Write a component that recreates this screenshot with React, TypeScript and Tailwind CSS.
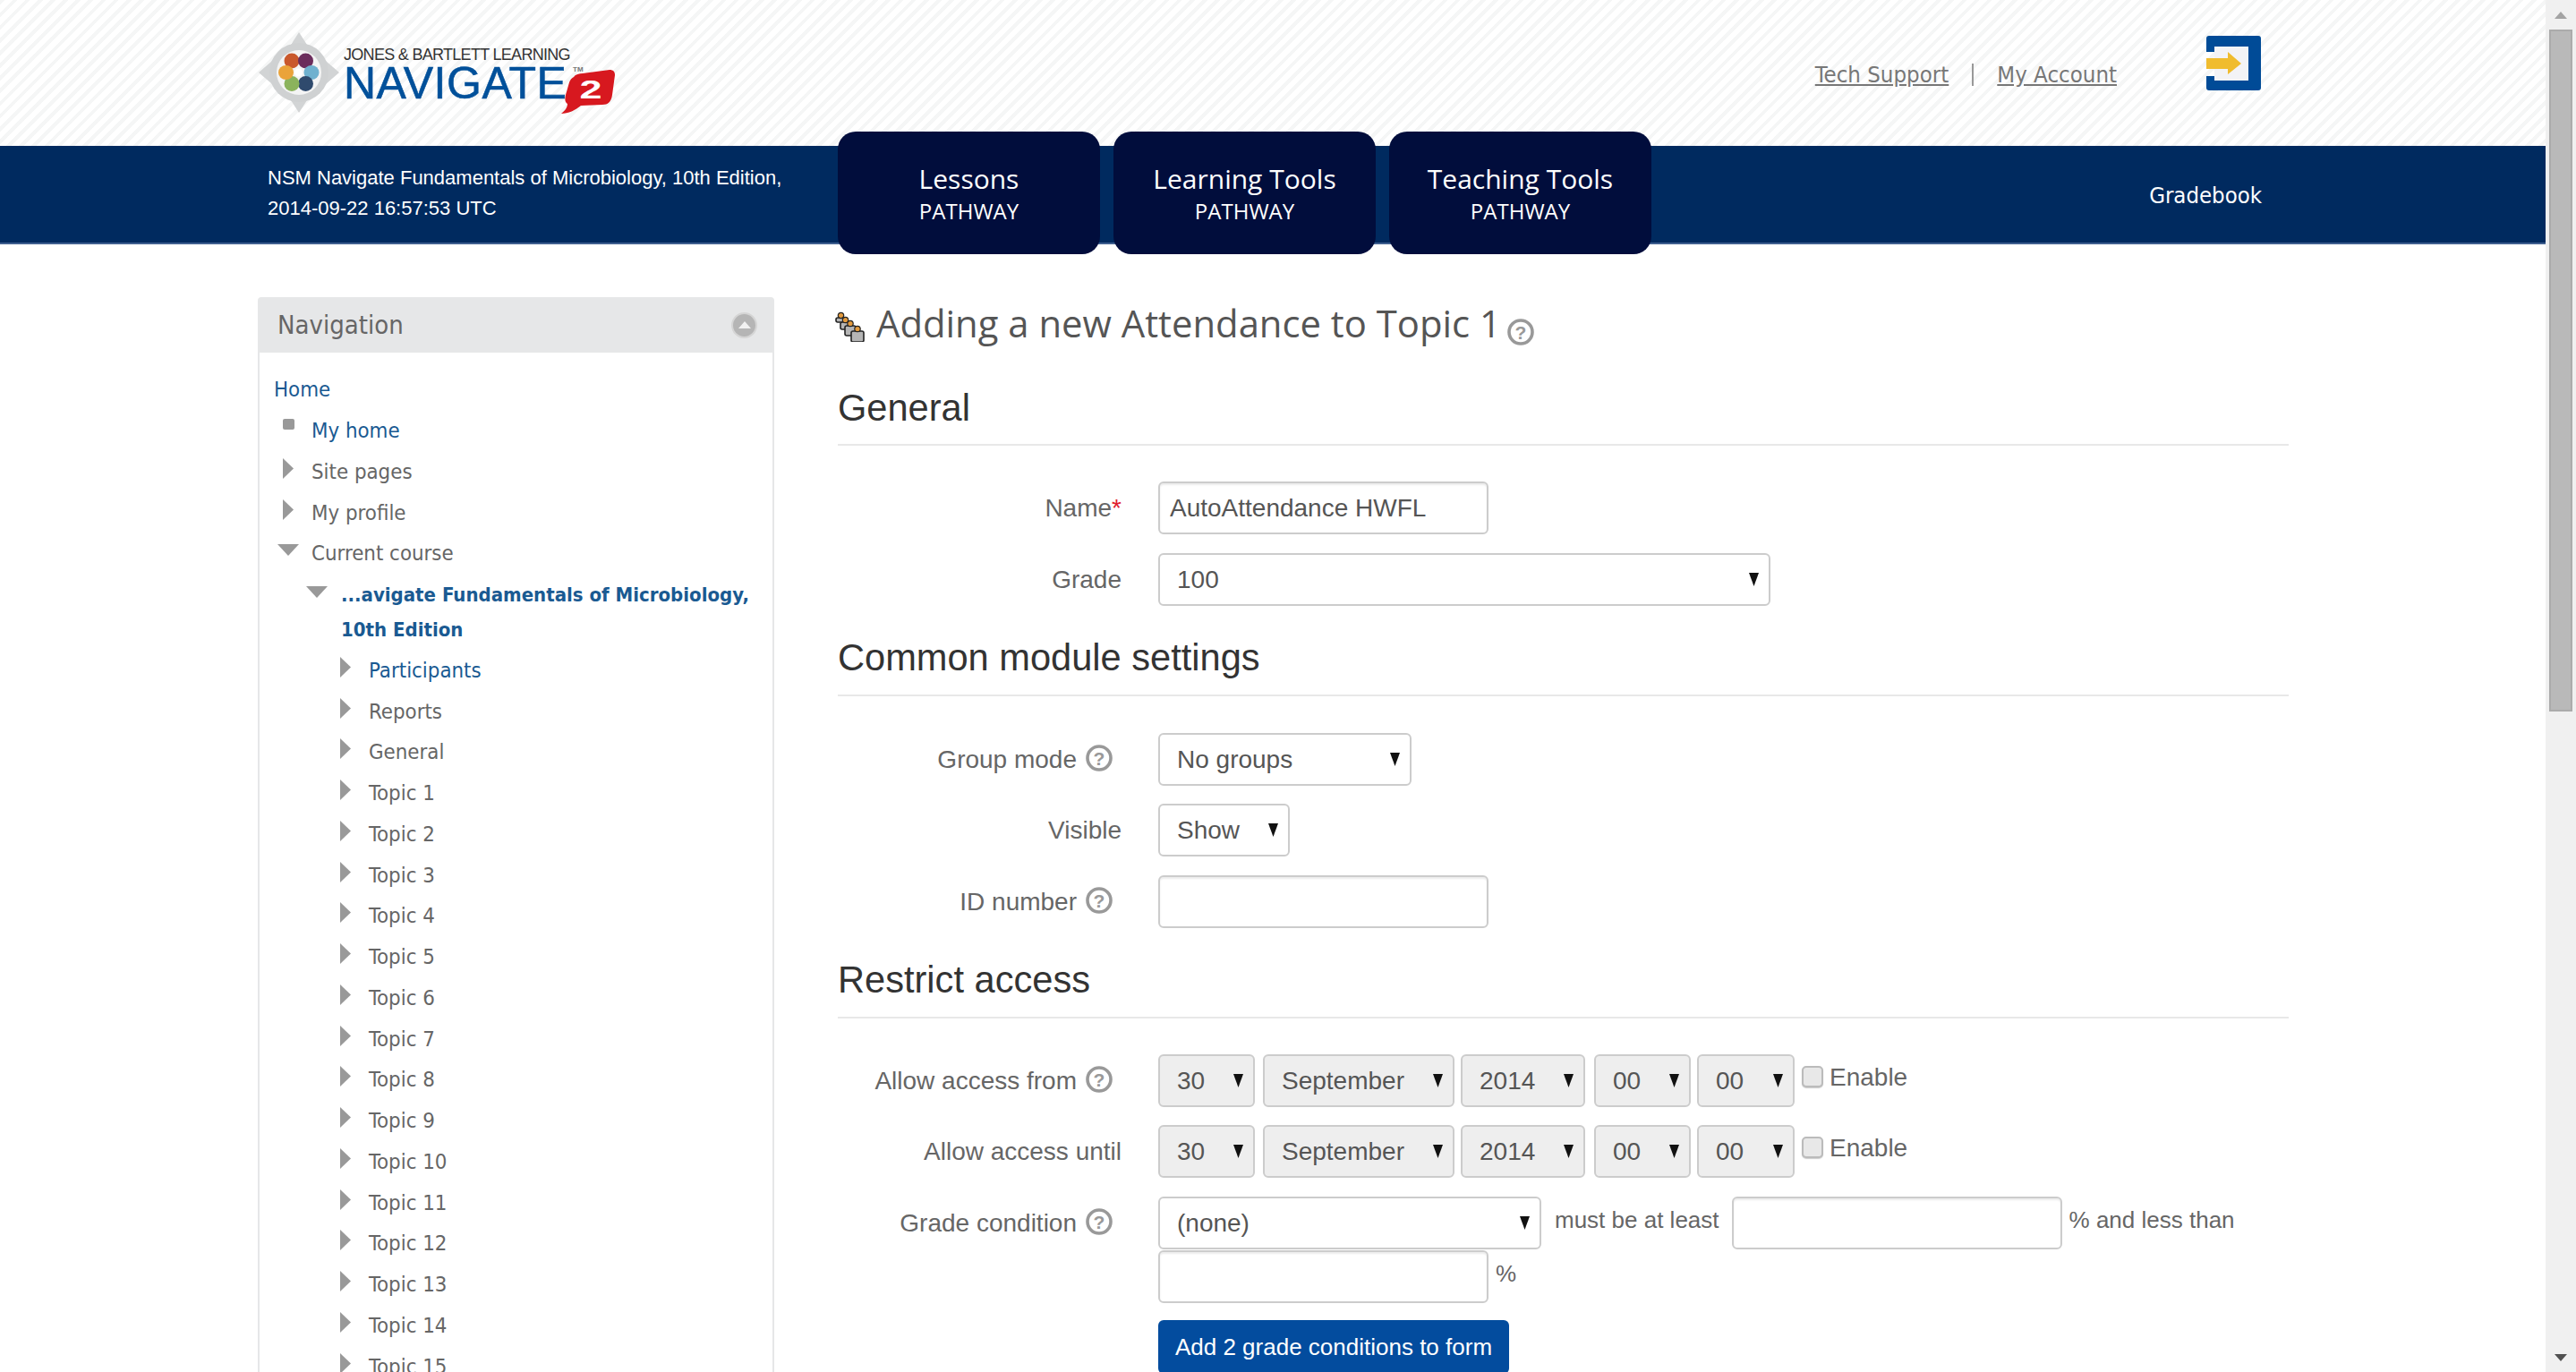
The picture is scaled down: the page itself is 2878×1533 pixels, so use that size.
import React from "react";

const SIDE = "font-['DejaVu_Sans','Noto_Sans',sans-serif] font-stretch-condensed";
const ARIAL = "font-['Liberation_Sans',Arial,sans-serif]";
const OPEN = "font-['Open_Sans',sans-serif]";

function Logo() {
  return (
    <div className="flex items-start pt-[36px]">
      <svg width="90" height="90" viewBox="0 0 90 90" className="shrink-0">
        <polygon points="45,0 54,14 90,45 54,76 45,90 36,76 0,45 36,14" fill="#d2d4d5" />
        <circle cx="45" cy="45" r="33" fill="#cfd1d2" />
        <circle cx="45" cy="45" r="25" fill="#f4f4f4" />
        <ellipse cx="37" cy="32" rx="8.5" ry="8.5" fill="#c9582c" />
        <ellipse cx="52.5" cy="32" rx="8.5" ry="8.5" fill="#6b2d5c" />
        <ellipse cx="59" cy="45" rx="8.5" ry="8" fill="#6fb1cf" />
        <ellipse cx="52.5" cy="57.5" rx="8.5" ry="8.5" fill="#2f4a6d" />
        <ellipse cx="37" cy="57.5" rx="8.5" ry="8.5" fill="#8bb35c" />
        <ellipse cx="30.5" cy="45" rx="8.5" ry="8" fill="#eaa33a" />
        <circle cx="44.5" cy="45" r="4.5" fill="#fff" />
      </svg>
      <div className="ml-[5px] flex flex-col pt-[14px]">
        <span className={`${ARIAL} text-[18px] leading-[22px] tracking-[-0.7px] text-[#333]`}>JONES &amp; BARTLETT LEARNING</span>
        <div className="flex items-start">
          <span className={`${ARIAL} text-[50px] leading-[42px] tracking-[0.5px] text-[#00509a] [-webkit-text-stroke:0.6px_#00509a]`}>NAVIGATE</span>
          <svg width="60" height="54" viewBox="0 0 60 54" className="-ml-[6px] mt-[1px] shrink-0">
            <text x="13" y="7" fontFamily="Liberation Sans" fontSize="8" fontWeight="700" fill="#777">TM</text>
            <path d="M14 13 C16 10 20 9 24 9 L54 5 C58 5 60 7 60 11 L57 33 C56 41 52 44 46 44 L22 45 C16 50 8 54 0 54 C4 51 7 47 7 43 C4 41 4 38 5 33 L9 19 C10 16 12 14 14 13 Z" fill="#d7181f" />
            <text transform="translate(33 37) scale(1.5 1)" textAnchor="middle" fontFamily="Liberation Sans" fontWeight="700" fontSize="30" fill="#fff">2</text>
          </svg>
        </div>
      </div>
    </div>
  );
}

function LogoutIcon() {
  return (
    <svg width="61" height="61" viewBox="0 0 61 61" className="shrink-0">
      <path d="M3 0 H58 a3 3 0 0 1 3 3 V58 a3 3 0 0 1 -3 3 H3 a3 3 0 0 1 -3 -3 V45 H9 V50 H47 V12 H9 V18 H0 V3 a3 3 0 0 1 3 -3 Z" fill="#004b97" />
      <rect x="9" y="12" width="38" height="38" fill="#f3f3f6" />
      <path d="M0 25 H24 V18 L39 31 L24 43 V37 H0 Z" fill="#f0bc2e" />
    </svg>
  );
}

function Header() {
  return (
    <div className="flex h-[163px] justify-between bg-[repeating-linear-gradient(135deg,#f5f6f6_0px,#f5f6f6_4px,#ffffff_4px,#ffffff_10px)] pl-[289px] pr-[318px]">
      <Logo />
      <div className="flex items-start">
        <div className={`${SIDE} mt-[65px] flex h-[36px] items-center text-[25.6px] text-[#777]`}>
          <a className="underline">Tech Support</a>
          <span className="mx-[26px] h-[25px] w-[2px] bg-[#999]" />
          <a className="underline">My Account</a>
        </div>
        <div className="ml-[100px] mt-[40px]"><LogoutIcon /></div>
      </div>
    </div>
  );
}

function Tab({ title }: { title: string }) {
  return (
    <div className={`${OPEN} flex h-[137px] w-[293px] flex-col items-center justify-center rounded-[20px] bg-[#010d3c] text-white`}>
      <span className="text-[30px] leading-[40px]">{title}</span>
      <span className="text-[24px] leading-[32px]">PATHWAY</span>
    </div>
  );
}

function Band() {
  return (
    <div className="flex h-[110px] items-start justify-between border-b-2 border-[#3f5f8f] bg-[#002a5f] pl-[299px] pr-[317px]">
      <div className={`${ARIAL} w-[637px] shrink-0 pt-[19px] text-[22px] leading-[34px] text-white`}>
        <div className="whitespace-nowrap">NSM Navigate Fundamentals of Microbiology, 10th Edition,</div>
        <div>2014-09-22 16:57:53 UTC</div>
      </div>
      <div className="-mt-[16px] flex gap-[15px]">
        <Tab title="Lessons" />
        <Tab title="Learning Tools" />
        <Tab title="Teaching Tools" />
      </div>
      <div className={`${SIDE} ml-auto pt-[37px] text-[25.5px] leading-[36px] text-white`}>Gradebook</div>
    </div>
  );
}

function TriRight() {
  return (
    <svg width="12" height="23" viewBox="0 0 12 23" className="-mt-[8px] shrink-0">
      <polygon points="0,0 12,11.5 0,23" fill="#999" />
    </svg>
  );
}
function TriDown() {
  return (
    <svg width="24" height="13" viewBox="0 0 24 13" className="-mt-[8px] shrink-0">
      <polygon points="0,0 24,0 12,13" fill="#999" />
    </svg>
  );
}

const TOPICS = Array.from({ length: 15 }, (_, i) => `Topic ${i + 1}`);

function Sidebar() {
  return (
    <aside className={`${SIDE} w-[577px] shrink-0 text-[23.8px] leading-[39px]`}>
      <div className="flex h-[62px] items-center justify-between rounded-t-[4px] bg-[#e6e7e8] pl-[22px] pr-[19px]">
        <span className="text-[29px] text-[#666]">Navigation</span>
        <span className="flex h-[29px] w-[29px] items-center justify-center rounded-full border-2 border-[#d5d5d5] bg-[#b5b5b5]">
          <svg width="14" height="8" viewBox="0 0 14 8"><polygon points="7,0 14,8 0,8" fill="#f2f2f2" /></svg>
        </span>
      </div>
      <div className="h-[1200px] border-x-2 border-[#e6e7e8] pl-[16px] pt-[19px]">
        <div className="flex h-[45.75px] items-center text-[#1a5a92]">Home</div>
        <div className="pl-[10px]">
          <div className="flex h-[45.75px] items-center text-[#1a5a92]">
            <span className="flex w-[32px] shrink-0"><span className="-mt-[14px] h-[12px] w-[13px] rounded-[2px] bg-[#999]" /></span>My home
          </div>
          {["Site pages", "My profile"].map((t) => (
            <div key={t} className="flex h-[45.75px] items-center text-[#666]">
              <span className="flex w-[32px] shrink-0"><TriRight /></span>{t}
            </div>
          ))}
          <div className="-ml-[6px] flex h-[45.75px] items-center text-[#666]">
            <span className="flex w-[38px] shrink-0"><TriDown /></span>Current course
          </div>
          <div className="-ml-[6px] flex pb-[3.35px] pl-[32px] pt-[3.4px] font-bold text-[#1a5a92]">
            <span className="flex w-[39px] shrink-0 pt-[10px]"><svg width="24" height="13" viewBox="0 0 24 13" className="shrink-0"><polygon points="0,0 24,0 12,13" fill="#999" /></svg></span>
            <span className="text-[22px]">...avigate Fundamentals of Microbiology,<br />10th Edition</span>
          </div>
          <div className="pl-[64px]">
            {["Participants", "Reports", "General", ...TOPICS].map((t) => (
              <div key={t} className={`flex h-[45.75px] items-center ${t === "Participants" ? "text-[#1a5a92]" : "text-[#666]"}`}>
                <span className="flex w-[32px] shrink-0"><TriRight /></span>{t}
              </div>
            ))}
          </div>
        </div>
      </div>
    </aside>
  );
}

function Help({ className = "" }: { className?: string }) {
  return (
    <svg width="30" height="30" viewBox="0 0 30 30" className={`shrink-0 ${className}`}>
      <circle cx="15" cy="15" r="13" fill="#fff" stroke="#999" strokeWidth="3.6" />
      <text x="15" y="22.5" textAnchor="middle" fontFamily="Liberation Sans" fontWeight="700" fontSize="21" fill="#999">?</text>
    </svg>
  );
}

function Select({ value, w, disabled }: { value: string; w: string; disabled?: boolean }) {
  return (
    <div className={`relative h-[59px] shrink-0 ${w}`}>
      <select
        defaultValue={value}
        className={`${ARIAL} h-full w-full appearance-none rounded-[6px] border-2 border-[#ccc] pl-[19px] text-[28px] text-[#555] ${disabled ? "bg-[#eeeeee]" : "bg-white"}`}
      >
        <option>{value}</option>
      </select>
      <svg width="11" height="15" viewBox="0 0 11 15" className="absolute right-[13px] top-[22px]">
        <polygon points="0,0 11,0 5.5,15" fill="#111" />
      </svg>
    </div>
  );
}

function Input({ w, value = "" }: { w: string; value?: string }) {
  return (
    <input
      readOnly
      value={value}
      className={`${ARIAL} h-[59px] shrink-0 ${w} rounded-[6px] border-2 border-[#ccc] bg-white pl-[11px] text-[28px] text-[#555] shadow-[inset_0_2px_2px_rgba(0,0,0,0.08)]`}
    />
  );
}

function Label({ text, req, help }: { text: string; req?: boolean; help?: boolean }) {
  return (
    <div className={`flex h-[59px] w-[358px] shrink-0 items-center justify-end ${help ? "pr-[51px]" : "pr-[41px]"} text-[28px] text-[#666]`}>
      <span>{text}</span>
      {req && <span className="text-[#e02030]">*</span>}
      {help && <Help className="-mt-[4px] ml-[10px]" />}
    </div>
  );
}

function Section({ title, pb }: { title: string; pb: string }) {
  return (
    <div className={`border-b-2 border-[#e8e8e8] ${pb}`}>
      <h2 className="text-[41.6px] leading-[50px] text-[#333]">{title}</h2>
    </div>
  );
}

function DateRow({ label, help, mt }: { label: string; help?: boolean; mt: string }) {
  return (
    <div className={`${mt} flex`}>
      <Label text={label} help={help} />
      <div className="flex">
        <Select value="30" w="w-[108px]" disabled />
        <div className="w-[9px]" />
        <Select value="September" w="w-[214px]" disabled />
        <div className="w-[7px]" />
        <Select value="2014" w="w-[139px]" disabled />
        <div className="w-[10px]" />
        <Select value="00" w="w-[108px]" disabled />
        <div className="w-[7px]" />
        <Select value="00" w="w-[109px]" disabled />
      </div>
      <label className="ml-[8px] flex h-[52px] items-center">
        <input type="checkbox" className="-mt-[3px] h-[24px] w-[24px] appearance-none rounded-[5px] border-2 border-[#bbb] bg-[#e8e8e8] shadow-[0_1px_1px_rgba(0,0,0,0.2)]" />
        <span className="ml-[7px] text-[28px] text-[#666]">Enable</span>
      </label>
    </div>
  );
}

function AttendanceIcon() {
  return (
    <svg width="34" height="34" viewBox="0 0 34 34" className="-ml-[3px] mt-[7px] shrink-0">
      {[
        [1, 7, 11, 5],
        [6, 12, 11, 8],
        [11, 16, 12, 11],
        [18, 22, 14, 12],
      ].map(([x, y, w, h], i) => (
        <g key={i}>
          <rect x={x} y={y} width={w} height={h} rx="2" fill="#b5b5b5" stroke="#222" strokeWidth="1.6" />
          <circle cx={x + w / 2} cy={y - 2.5} r="3.2" fill="#e39a3c" stroke="#222" strokeWidth="1.2" />
        </g>
      ))}
    </svg>
  );
}

function Main() {
  return (
    <main className={`${ARIAL} -mt-[1px] ml-[71px] w-[1621px] shrink-0`}>
      <div className="flex items-center">
        <AttendanceIcon />
        <h1 className={`${OPEN} ml-[12px] text-[41.8px] leading-[60px] text-[#555]`}>Adding a new Attendance to Topic 1</h1>
        <Help className="ml-[7px] mt-[20px]" />
      </div>
      <div className="mt-[40px]"><Section title="General" pb="pb-[15px]" /></div>
      <div className="mt-[40px] flex">
        <Label text="Name" req />
        <Input w="w-[369px]" value="AutoAttendance HWFL" />
      </div>
      <div className="mt-[21px] flex">
        <Label text="Grade" />
        <Select value="100" w="w-[684px]" />
      </div>
      <div className="mt-[33px]"><Section title="Common module settings" pb="pb-[16px]" /></div>
      <div className="mt-[41px] flex">
        <Label text="Group mode" help />
        <Select value="No groups" w="w-[283px]" />
      </div>
      <div className="mt-[20px] flex">
        <Label text="Visible" />
        <Select value="Show" w="w-[147px]" />
      </div>
      <div className="mt-[21px] flex">
        <Label text="ID number" help />
        <Input w="w-[369px]" />
      </div>
      <div className="mt-[33px]"><Section title="Restrict access" pb="pb-[16px]" /></div>
      <DateRow label="Allow access from" help mt="mt-[40px]" />
      <DateRow label="Allow access until" mt="mt-[20px]" />
      <div className="mt-[21px] flex">
        <Label text="Grade condition" help />
        <div className="flex flex-wrap items-start">
          <Select value="(none)" w="w-[428px]" />
          <span className="ml-[15px] h-[52px] text-[26px] leading-[52px] text-[#666]">must be at least</span>
          <div className="ml-[14px]"><Input w="w-[369px]" /></div>
          <span className="ml-[8px] h-[52px] text-[26px] leading-[52px] text-[#666]">% and less than</span>
          <div className="mt-[1px] flex w-full">
            <Input w="w-[369px]" />
            <span className="ml-[8px] text-[26px] leading-[52px] text-[#666]">%</span>
          </div>
        </div>
      </div>
      <div className="mt-[19px] flex">
        <div className="w-[358px] shrink-0" />
        <button className="h-[60px] w-[392px] rounded-[6px] bg-[#034c9e] text-[26px] text-white">Add 2 grade conditions to form</button>
      </div>
    </main>
  );
}

function Scrollbar() {
  return (
    <div className="flex h-full w-[34px] shrink-0 flex-col items-center bg-[#f0f0f0]">
      <div className="flex h-[33px] items-center justify-center">
        <svg width="14" height="8" viewBox="0 0 14 8"><polygon points="7,0 14,8 0,8" fill="#a3a3a3" /></svg>
      </div>
      <div className="h-[762px] w-[26px] border-2 border-[#ababab] bg-[#b9b9b9]" />
      <div className="flex-1" />
      <div className="flex h-[33px] items-center justify-center">
        <svg width="14" height="8" viewBox="0 0 14 8"><polygon points="0,0 14,0 7,8" fill="#505050" /></svg>
      </div>
    </div>
  );
}

export default function App() {
  return (
    <div className="flex h-[1533px] w-[2878px] overflow-hidden bg-white">
      <div className="w-[2844px] shrink-0 overflow-hidden">
        <Header />
        <Band />
        <div className="flex pl-[288px] pt-[59px]">
          <Sidebar />
          <Main />
        </div>
      </div>
      <Scrollbar />
    </div>
  );
}
